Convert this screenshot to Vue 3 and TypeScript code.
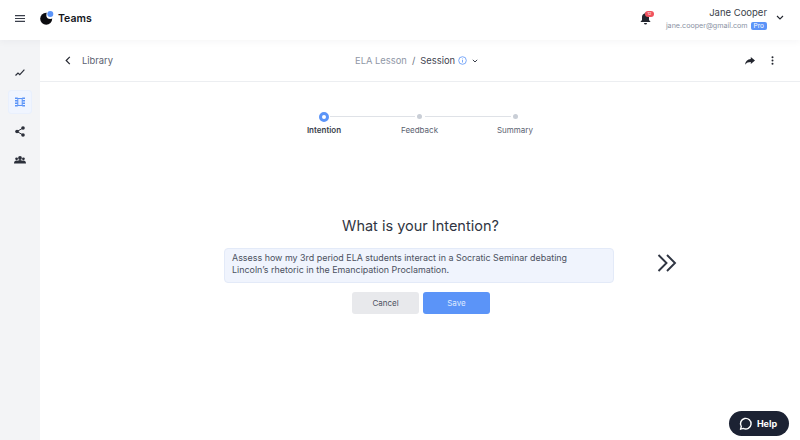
<script setup lang="ts">
const steps = [
  { label: 'Intention', active: true },
  { label: 'Feedback', active: false },
  { label: 'Summary', active: false },
]
</script>

<template>
  <div class="app">
    <header class="top">
      <svg class="menu" width="10" height="7" viewBox="0 0 10 7"><path d="M0 .6h10M0 3.500h10M0 6.400h10" stroke="#3a3f4b" stroke-width="1.100" fill="none" /></svg>
      <svg class="logo" width="14" height="14" viewBox="0 0 14 14">
        <circle cx="6.200" cy="7.800" r="6" fill="#0b0b0f" />
        <circle cx="10.200" cy="4" r="3.900" fill="#fff" />
        <circle cx="10.300" cy="3" r="3" fill="#5b94f8" />
      </svg>
      <span class="brand">Teams</span>
      <span class="spacer"></span>
      <span class="bell">
        <svg width="11" height="13" viewBox="0 0 11 13"><path d="M5.500 0.500c.5 0 .8.400.8.900C8 1.800 9 3.200 9 5v3l1.600 2H.4L2 8V5c0-1.800 1-3.200 2.700-3.600 0-.5.300-.9.800-.9ZM4 11h3a1.500 1.500 0 0 1-3 0Z" fill="#23262f" /></svg>
        <span class="badge">12</span>
      </span>
      <div class="user">
        <div class="name">Jane Cooper</div>
        <div class="mail">jane.cooper@gmail.com <span class="pro">Pro</span></div>
      </div>
      <svg class="caret" width="8" height="5" viewBox="0 0 8 5"><path d="M1 1l3 3 3-3" stroke="#23262f" stroke-width="1.100" fill="none" /></svg>
    </header>
    <div class="body">
      <aside class="side">
        <button class="nav">
          <svg width="10" height="8" viewBox="0 0 10 8"><path d="M.5 6.500 3 4l1.800 1.600L9.400.6" stroke="#2b2f3a" stroke-width="1.200" fill="none" /></svg>
        </button>
        <button class="nav on">
          <svg width="10" height="10" viewBox="0 0 10 10"><rect x="2.800" y="1.500" width="4.400" height="7" fill="#e6eeff" stroke="#5b94f8" stroke-width="1" /><path d="M0 1.300h2.800M7.200 1.300h2.800M0 3.800h2.800M7.200 3.800h2.800M0 6.200h2.800M7.200 6.200h2.800M0 8.700h2.800M7.200 8.700h2.800" stroke="#5b94f8" stroke-width="1.500" /></svg>
        </button>
        <button class="nav">
          <svg width="10" height="11" viewBox="0 0 10 11"><path d="M8 2 2 5.500 8 9" stroke="#2b2f3a" stroke-width="1" fill="none" /><circle cx="8" cy="2" r="1.800" fill="#2b2f3a" /><circle cx="2" cy="5.500" r="1.800" fill="#2b2f3a" /><circle cx="8" cy="9" r="1.800" fill="#2b2f3a" /></svg>
        </button>
        <button class="nav">
          <svg width="12" height="8" viewBox="0 0 12 8"><circle cx="6" cy="2" r="1.900" fill="#2b2f3a" /><circle cx="2.600" cy="2.800" r="1.400" fill="#2b2f3a" /><circle cx="9.400" cy="2.800" r="1.400" fill="#2b2f3a" /><path d="M0 7.500c0-2 1-3 2.600-3 .5 0 .9.100 1.200.3.600-.5 1.300-.7 2.200-.7s1.600.2 2.200.7c.3-.2.700-.3 1.200-.3 1.600 0 2.600 1 2.600 3Z" fill="#2b2f3a" /></svg>
        </button>
      </aside>
      <main class="main">
        <div class="bar">
          <div class="back">
            <svg width="6" height="9" viewBox="0 0 6 9"><path d="M4.800.8 1.200 4.500l3.600 3.700" stroke="#23262f" stroke-width="1.200" fill="none" /></svg>
            <span>Library</span>
          </div>
          <div class="crumbs">
            <span class="muted">ELA Lesson</span>
            <span class="slash">/</span>
            <span class="cur">Session</span>
            <svg width="9" height="9" viewBox="0 0 9 9"><circle cx="4.500" cy="4.500" r="3.800" stroke="#5b94f8" stroke-width=".8" fill="none" /><path d="M4.500 4v2.500M4.500 2.500v.8" stroke="#5b94f8" stroke-width=".8" /></svg>
            <svg class="cv" width="6" height="4" viewBox="0 0 6 4"><path d="M.8.8 3 3 5.200.8" stroke="#3a3f4b" stroke-width="1" fill="none" /></svg>
          </div>
          <div class="tools">
            <svg width="10" height="8" viewBox="0 0 10 8"><path d="M5.800 0 10 3.500 5.800 7V5C3.400 5 1.500 5.600 0 7.800.4 4.600 2.400 2.400 5.800 2Z" fill="#23262f" /></svg>
            <svg width="3" height="9" viewBox="0 0 3 9"><circle cx="1.500" cy="1.200" r="1" fill="#23262f" /><circle cx="1.500" cy="4.500" r="1" fill="#23262f" /><circle cx="1.500" cy="7.800" r="1" fill="#23262f" /></svg>
          </div>
        </div>
        <section class="stepper">
          <div v-for="(s, i) in steps" :key="s.label" class="step" :class="{ active: s.active }">
            <div class="track">
              <span v-if="i > 0" class="line left"></span>
              <span class="dot"></span>
              <span v-if="i < steps.length - 1" class="line right"></span>
            </div>
            <span class="lbl">{{ s.label }}</span>
          </div>
        </section>
        <section class="form">
          <h1>What is your Intention?</h1>
          <div class="row">
            <div class="box">Assess how my 3rd period ELA students interact in a Socratic Seminar debating Lincoln’s rhetoric in the Emancipation Proclamation.</div>
            <svg class="next" width="20" height="18" viewBox="0 0 20 18"><path d="M1.500 1 9.500 9l-8 8M10 1l8 8-8 8" stroke="#2f3542" stroke-width="1.900" fill="none" /></svg>
          </div>
          <div class="btns">
            <button class="btn cancel">Cancel</button>
            <button class="btn save">Save</button>
          </div>
        </section>
      </main>
    </div>
    <button class="help">
      <svg width="15" height="15" viewBox="0 0 15 15"><path d="M2.500 13.200 3.300 10.500A5.300 5.300 0 1 1 5.400 12.400Z" stroke="#fff" stroke-width="1.400" fill="none" stroke-linejoin="round" /></svg>
      Help
    </button>
  </div>
</template>

<style>
html, body { margin: 0; background: #fff; overflow: hidden; }
</style>

<style scoped>
.app { width: 800px; height: 440px; display: flex; flex-direction: column; font-family: Inter, "Liberation Sans", sans-serif; color: #2f3542; position: relative; overflow: hidden; }
.top { height: 40px; flex: none; display: flex; align-items: center; padding: 0 16px 3px 0; box-sizing: border-box; background: #fff; position: relative; z-index: 2; box-shadow: 0 1px 8px rgba(30, 40, 60, .05); }
.menu { margin-left: 15px; }
.logo { margin-left: 15px; margin-top: -2px; }
.brand { margin-left: 4px; font-size: 10.500px; font-weight: 600; color: #14161c; }
.spacer { flex: 1; }
.bell { position: relative; display: flex; }
.badge { position: absolute; left: 5px; top: -1px; width: 9px; height: 6px; border-radius: 3px; background: #f0525d; color: #fff; font-size: 4px; line-height: 6px; text-align: center; }
.user { width: 116px; text-align: right; }
.name { font-size: 9.500px; line-height: 12px; color: #3a3f4b; }
.mail { font-size: 7.150px; line-height: 10px; margin-top: 2px; color: #8a92a3; white-space: nowrap; display: flex; justify-content: flex-end; align-items: center; gap: 3px; }
.pro { background: #5b94f8; color: #fff; font-size: 6.500px; line-height: 8px; padding: 0 3px; border-radius: 2px; }
.caret { margin-left: 9px; margin-top: -2px; }
.body { flex: 1; display: flex; min-height: 0; }
.side { width: 40px; flex: none; background: #f3f4f6; display: flex; flex-direction: column; align-items: center; padding-top: 21px; gap: 5px; box-sizing: border-box; }
.nav { width: 24px; height: 24px; padding: 0; border: 1px solid transparent; border-radius: 3px; background: none; display: flex; align-items: center; justify-content: center; }
.nav.on { background: #f0f5ff; border-color: #e9f0fd; }
.main { flex: 1; min-width: 0; display: flex; flex-direction: column; background: #fff; }
.bar { height: 42px; flex: none; position: relative; display: flex; align-items: center; justify-content: space-between; border-bottom: 1px solid #eceef1; box-sizing: border-box; padding: 0 26px 0 25px; }
.back { display: flex; align-items: center; gap: 11px; font-size: 9.400px; color: #5b6270; }
.crumbs { position: absolute; left: 315px; top: 0; height: 41px; display: flex; align-items: center; font-size: 9.400px; }
.muted { color: #8f97a6; }
.slash { margin: 0 5px; color: #6b7280; }
.cur { color: #3f4451; margin-right: 3px; }
.cv { margin-left: 5px; }
.tools { display: flex; align-items: center; gap: 16px; }
.stepper { display: flex; justify-content: center; height: 98px; padding-top: 29px; box-sizing: border-box; margin-left: -1px; }
.step { width: 95.500px; display: flex; flex-direction: column; align-items: center; }
.track { width: 100%; height: 11px; position: relative; display: flex; align-items: center; justify-content: center; }
.dot { width: 5px; height: 5px; border-radius: 50%; background: #c9ced6; }
.step.active .dot { width: 4px; height: 4px; background: #fff; border: 3px solid #5b94f8; }
.line { position: absolute; height: 1px; background: #dfe2e7; top: 5px; }
.line.left { left: 0; right: 52px; }
.line.right { left: 53px; right: 0; }
.step.active .line.right { left: 54px; }
.lbl { margin-top: 3px; font-size: 8px; line-height: 11px; color: #5b6270; }
.step.active .lbl { font-weight: 600; color: #3a3f4b; }
.form { display: flex; flex-direction: column; align-items: center; margin-top: 36px; width: 758px; }
h1 { margin: 0 0 0 3px; font-size: 14.500px; line-height: 20px; font-weight: 400; color: #2f3542; }
.row { position: relative; margin-top: 12px; }
.box { width: 390px; height: 35px; box-sizing: border-box; padding: 3px 30px 3px 7px; background: #f0f4fd; border: 1px solid #e3eaf8; border-radius: 4px; font-size: 8.920px; line-height: 11.500px; color: #4b5160; }
.next { position: absolute; left: 433px; top: 6px; }
.btns { display: flex; gap: 4px; margin-top: 9px; transform: translateX(2px); }
.btn { width: 67px; height: 22px; border: 0; border-radius: 3px; font: inherit; font-size: 8px; padding: 0; }
.cancel { background: #e8e9ec; color: #4b5160; }
.save { background: #5b94f8; color: #dfeaff; }
.help { position: absolute; left: 729px; top: 411px; width: 60px; height: 25px; padding: 0 3px 0 0; border: 0; border-radius: 13px; background: #1c2233; color: #fff; font: inherit; font-size: 9px; font-weight: 700; display: flex; align-items: center; justify-content: center; gap: 4px; }
</style>
